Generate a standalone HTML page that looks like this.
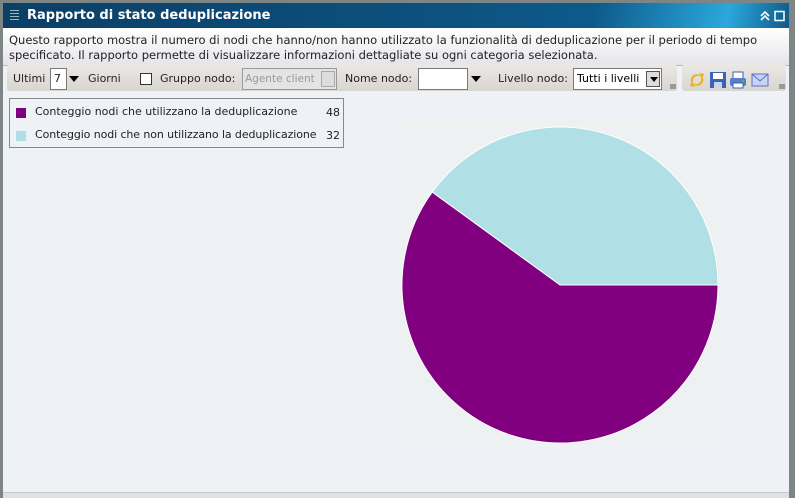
<!DOCTYPE html>
<html><head><meta charset="utf-8"><style>
*{margin:0;padding:0;box-sizing:border-box}
body{width:795px;height:498px;overflow:hidden;background:#7d8585;font-family:"DejaVu Sans","Liberation Sans",sans-serif;font-size:12px;color:#222;position:relative}
.win{position:absolute;left:3px;top:3px;width:786px;height:495px;background:#eef1f5}
.title{position:absolute;left:0;top:0;width:786px;height:25px;background:linear-gradient(100deg,#0b3f66 0%,#0d4f7c 50%,#0d5a8a 75%,#2aa8dc 92%,#0f5a88 100%);color:#fff;font-weight:bold;font-size:13px;line-height:25px;padding-left:24px;font-family:"DejaVu Sans",sans-serif}
.desc{position:absolute;left:0;top:25px;width:786px;height:38px;background:linear-gradient(#fff,#e6e4e8);border-bottom:1px solid #b8b8b8;padding:5px 0 0 6px;line-height:15px;font-size:11.5px;letter-spacing:0px}
.tb{position:absolute;top:64px;height:27px;background:linear-gradient(#ebe9e6,#d9d5d0);border-radius:3px}
.t{position:absolute;top:72px;font-size:11px}
.box{position:absolute;background:#fff;border:1px solid #7a7a7a;font-size:11px;padding-left:3px;line-height:18px}
.arr{position:absolute;width:0;height:0;border-left:5px solid transparent;border-right:5px solid transparent;border-top:6px solid #000}
.leg{position:absolute;left:9px;top:98px;width:335px;height:50px;border:1px solid #888;font-size:11px}
.bottom{position:absolute;left:3px;top:492px;width:786px;height:6px;background:#e2e0e2;border-top:1px solid #c8c8c8}
</style></head><body>
<div class="win">
<div class="title"><span style="position:absolute;left:7px;top:7px;width:9px;height:11px;background:repeating-linear-gradient(#9bb 0 1px,transparent 1px 3px)"></span>Rapporto di stato deduplicazione
<svg style="position:absolute;left:757px;top:7px" width="26" height="12"><path d="M1 6 L5 2 L9 6 M1 10 L5 6 L9 10" stroke="#fff" stroke-width="1.6" fill="none"/><rect x="15" y="1.5" width="9" height="9" stroke="#fff" stroke-width="1.5" fill="none"/></svg></div>
<div class="desc">Questo rapporto mostra il numero di nodi che hanno/non hanno utilizzato la funzionalità di deduplicazione per il periodo di tempo<br>specificato. Il rapporto permette di visualizzare informazioni dettagliate su ogni categoria selezionata.</div>
</div>
<div class="tb" style="left:7px;width:670px"></div>
<div class="tb" style="left:682px;width:104px"></div>
<div style="position:absolute;left:670px;top:84px;width:6px;height:5px;background:#999"></div>
<div style="position:absolute;left:779px;top:84px;width:6px;height:5px;background:#999"></div>
<span class="t" style="left:13px">Ultimi</span>
<div class="box" style="left:50px;top:68px;width:17px;height:22px;padding-top:1px">7</div>
<div class="arr" style="left:69px;top:76px"></div>
<span class="t" style="left:88px">Giorni</span>
<div style="position:absolute;left:140px;top:73px;width:12px;height:12px;border:1px solid #333;background:#fff"></div>
<span class="t" style="left:160px">Gruppo nodo:</span>
<div class="box" style="left:242px;top:68px;width:95px;height:22px;background:#e4e4e4;color:#999;border-color:#999;padding-top:1px;font-size:10.5px;padding-left:2px;white-space:nowrap;overflow:hidden">Agente client<span style="position:absolute;right:1px;top:2px;width:14px;height:16px;background:#ddd;border:1px solid #aaa"></span></div>
<span class="t" style="left:345px">Nome nodo:</span>
<div class="box" style="left:418px;top:68px;width:50px;height:22px"></div>
<div class="arr" style="left:471px;top:76px"></div>
<span class="t" style="left:498px">Livello nodo:</span>
<div class="box" style="left:573px;top:68px;width:89px;height:22px;color:#000;padding-top:1px">Tutti i livelli<span style="position:absolute;right:1px;top:2px;width:14px;height:16px;background:#ddd;border:1px solid #555"></span><span class="arr" style="right:3px;top:8px;border-left-width:4px;border-right-width:4px;border-top-width:5px"></span></div>
<svg style="position:absolute;left:688px;top:70px" width="90" height="20">
<path d="M3 12 A6 6 0 0 1 13 6 L11 3 L16 4 L14 9 L13 7 A5 5 0 0 0 5 12Z" fill="#e8b21c"/><path d="M15 8 A6 6 0 0 1 5 14 L7 17 L2 16 L4 11 L5 13 A5 5 0 0 0 13 8Z" fill="#e8b21c"/>
<rect x="22" y="2" width="16" height="16" fill="#3a62b8"/><rect x="25" y="3" width="10" height="6" fill="#fff"/><rect x="26" y="12" width="8" height="6" fill="#c8d4ee"/>
<rect x="45" y="2" width="10" height="7" fill="#fff" stroke="#3a62b8"/><rect x="42" y="8" width="16" height="8" rx="2" fill="#5a7ccc"/><rect x="45" y="13" width="10" height="5" fill="#fff" stroke="#3a62b8"/><rect x="54" y="10" width="2" height="2" fill="#3c3"/>
<rect x="64" y="4" width="16" height="12" fill="#c8d2f2" stroke="#5a6ecc"/><path d="M64 4 L72 11 L80 4" stroke="#5a6ecc" fill="none"/></svg>
<div class="leg">
<div style="position:absolute;left:6px;top:9px;width:10px;height:10px;background:#800080"></div>
<div style="position:absolute;left:25px;top:6px">Conteggio nodi che utilizzano la deduplicazione</div>
<div style="position:absolute;left:316px;top:7px">48</div>
<div style="position:absolute;left:6px;top:32px;width:10px;height:10px;background:#b0dfe5"></div>
<div style="position:absolute;left:25px;top:29px;letter-spacing:-0.1px">Conteggio nodi che non utilizzano la deduplicazione</div>
<div style="position:absolute;left:316px;top:30px">32</div>
</div>
<div style="position:absolute;left:400px;top:120px;width:321px;height:324px;background:#edf1f1"></div>
<svg style="position:absolute;left:0;top:0" width="795" height="498">
<path d="M560 285 L718 285 A158 158 0 0 0 432.2 192.1 Z" fill="#b0dfe5" stroke="#fff" stroke-width="1"/>
<path d="M560 285 L432.2 192.1 A158 158 0 1 0 718 285 Z" fill="#800080" stroke="#fff" stroke-width="1"/>
</svg>
<div class="bottom"></div>
</body></html>
